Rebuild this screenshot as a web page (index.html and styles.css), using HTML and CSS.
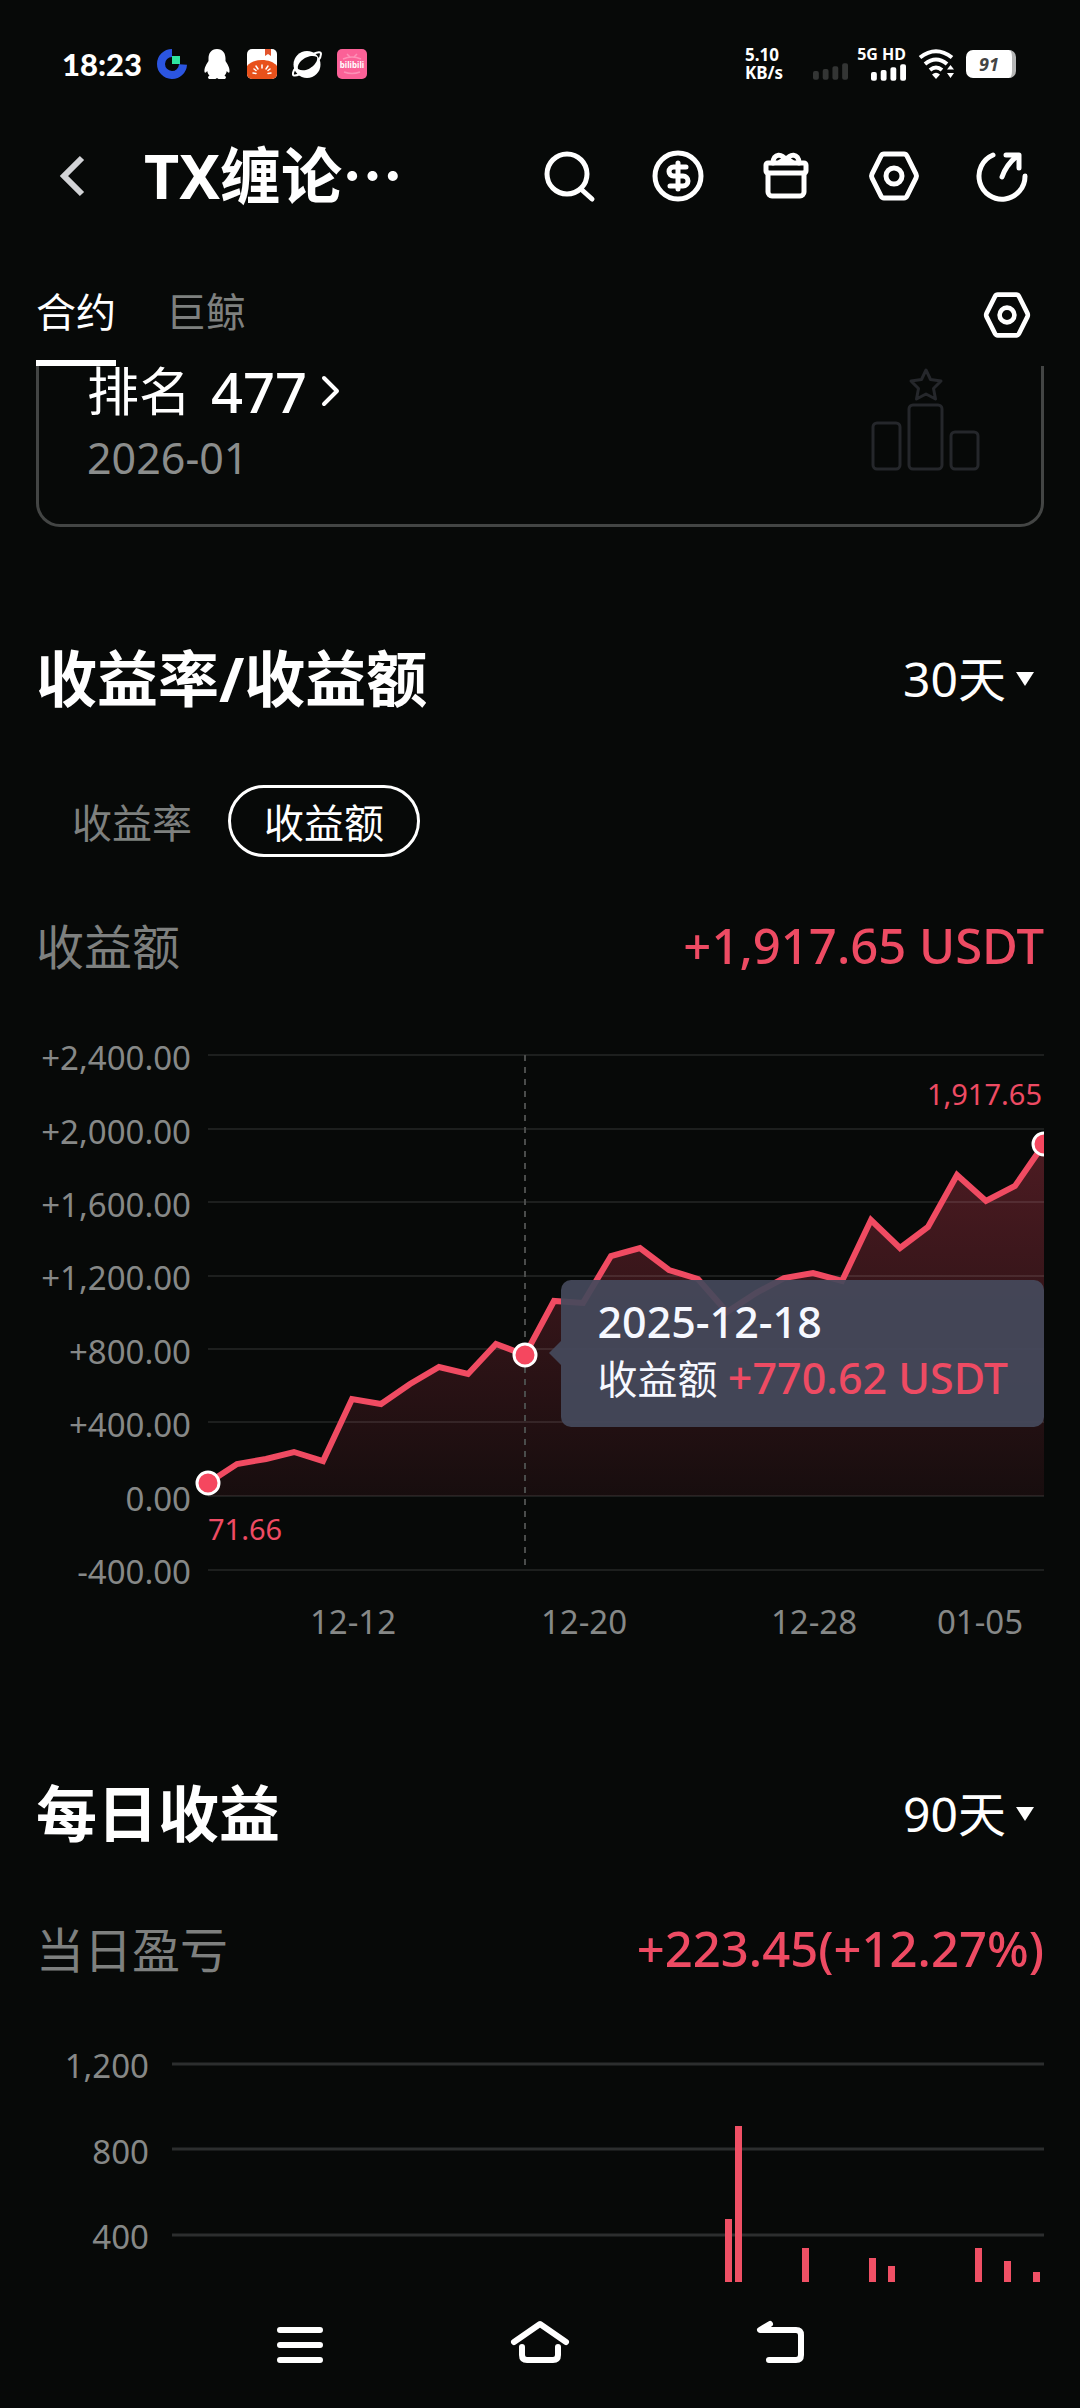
FILE: index.html
```html
<!DOCTYPE html>
<html lang="zh-CN">
<head>
    <meta charset="UTF-8">
    <meta name="viewport" content="width=device-width, initial-scale=1.0">
    <title>TX缠论</title>
    <link rel="stylesheet" href="styles.css">
</head>
<body>
<div class="status-bar">
    <div class="status-left">
        <span class="clock">18:23</span>
        <svg class="app-icon" viewBox="0 0 30 30">
            <path d="M15 4A11 11 0 1 0 26 15.500" fill="none" stroke="#2b55e0" stroke-width="8"/>
            <rect x="15" y="7" width="8" height="8" fill="#2ee6a0"/>
        </svg>
        <svg class="app-icon" viewBox="0 0 30 30" fill="#fff">
            <path d="M15 0C9 0 6.500 4.500 6.500 9.500V12C4.500 15 2 19 2.500 23C3 24.500 4 23.500 5.200 22C5.600 24 6.500 25.500 7.500 26.500C5.500 27.500 5.500 30 8 30H13.500L15 29L16.500 30H22C24.500 30 24.500 27.500 22.500 26.500C23.500 25.500 24.400 24 24.800 22C26 23.500 27 24.500 27.500 23C28 19 25.500 15 23.500 12V9.500C23.500 4.500 21 0 15 0Z"/>
        </svg>
        <svg class="app-icon" viewBox="0 0 30 30">
            <rect width="30" height="30" rx="5" fill="#fff"/>
            <path d="M18 0H24V7L21 5L18 7Z" fill="#e2542c"/>
            <path d="M0 17C6 9 24 9 30 17V25A5 5 0 0 1 25 30H5A5 5 0 0 1 0 25Z" fill="#e8511b"/>
            <path d="M15 16V19M9 17L11 20M21 17L19 20M6 24L9 24.500M24 24L21 24.500M7 20L9 21.500M23 20L21 21.500" stroke="#fff" stroke-width="1.500" stroke-linecap="round"/>
        </svg>
        <svg class="app-icon" viewBox="0 0 30 30">
            <circle cx="15" cy="15.500" r="13.500" fill="#fff"/>
            <path d="M6 20C4 13 17 4 25 8C27 14 15 25 6 20Z" fill="#070908"/>
            <path d="M4 18C1 22 -0 26 2 26.500C4 27 6 26 8 25M21 5C26 3 29 2.500 29 5C29 7 27.500 10 26 12" fill="none" stroke="#fff" stroke-width="2"/>
        </svg>
        <svg class="app-icon" viewBox="0 0 30 30">
            <rect width="30" height="30" rx="5" fill="#fb6197"/>
            <path d="M10 5L13 8M20 5L17 8M6 10Q15 6 24 10M7 23Q15 26 23 23" fill="none" stroke="#fd90b6" stroke-width="1.500"/>
            <text x="15" y="19" text-anchor="middle" class="tiny-logo">bilibili</text>
        </svg>
    </div>
    <div class="status-right">
        <div class="net-speed">
            <span>5.10</span>
            <span>KB/s</span>
        </div>
        <svg class="signal dim" viewBox="0 0 36 17">
            <rect y="8" width="6" height="9" rx="2"/>
            <rect x="10" y="6" width="6" height="11" rx="2"/>
            <rect x="20" y="3" width="6" height="14" rx="2"/>
            <rect x="30" width="6" height="17" rx="2"/>
        </svg>
        <div class="carrier">
            <span>5G HD</span>
            <svg class="signal" viewBox="0 0 36 17">
                <rect y="8" width="6" height="9" rx="2"/>
                <rect x="10" y="6" width="6" height="11" rx="2"/>
                <rect x="20" y="3" width="6" height="14" rx="2"/>
                <rect x="30" width="6" height="17" rx="2"/>
            </svg>
        </div>
        <svg class="wifi" viewBox="0 0 38 30">
            <path d="M2 8.500Q18 -4 34 8.500M7 15Q18 6 29 15M12 21Q18 16 24 21" fill="none" stroke="#fff" stroke-width="4"/>
            <path d="M14 25.500Q18 22 22 25.500L18 30Z" fill="#fff"/>
            <path d="M29 20.500L32.500 16L36 20.500ZM29 24L32.500 29L36 24Z" fill="#fff"/>
        </svg>
        <div class="battery">91</div>
    </div>
</div>

<header>
    <button class="icon-button back" aria-label="返回">
        <svg viewBox="0 0 54 54"><path d="M46 9L28 27L46 45" stroke="#d2d3d6" stroke-width="6"/></svg>
    </button>
    <h1>TX缠论⋯</h1>
    <div class="header-right">
        <button class="icon-button" aria-label="搜索">
            <svg viewBox="0 0 54 54"><circle cx="24" cy="25" r="20"/><path d="M39 41L49 50"/></svg>
        </button>
        <button class="icon-button" aria-label="资产">
            <svg viewBox="0 0 54 54"><circle cx="27" cy="27" r="23"/><path d="M27 14V40M35 18H22.500A4.500 4.500 0 0 0 22.500 27H32A5 5 0 0 1 32 37H19"/></svg>
        </button>
        <button class="icon-button" aria-label="礼物">
            <svg viewBox="0 0 54 54">
                <rect x="7" y="14" width="40" height="10" rx="2"/>
                <path d="M9 24V43A4 4 0 0 0 13 47H41A4 4 0 0 0 45 43V24M14 14C14 4 24 4 27 12C30 4 40 4 40 14M21 13L27 9L33 13"/>
            </svg>
        </button>
        <button class="icon-button" aria-label="设置">
            <svg viewBox="0 0 54 54"><path d="M17 5H37Q39 5 40 7L49 25Q50 27 49 29L40 47Q39 49 37 49H17Q15 49 14 47L5 29Q4 27 5 25L14 7Q15 5 17 5Z"/><circle cx="27" cy="27" r="8"/></svg>
        </button>
        <button class="icon-button" aria-label="分享">
            <svg viewBox="0 0 54 54"><path d="M18 6A23 23 0 1 0 50 27M27 28Q31 16 42 7M31 6H44V19"/></svg>
        </button>
    </div>
</header>

<nav class="tabs">
    <a href="#" class="tab active">合约</a>
    <a href="#" class="tab">巨鲸</a>
    <button class="icon-button tab-settings" aria-label="设置">
        <svg viewBox="0 0 54 54"><path d="M17 5H37Q39 5 40 7L49 25Q50 27 49 29L40 47Q39 49 37 49H17Q15 49 14 47L5 29Q4 27 5 25L14 7Q15 5 17 5Z"/><circle cx="27" cy="27" r="8"/></svg>
    </button>
</nav>

<main>
    <a href="#" class="rank-card">
        <div>
            <div class="rank-title">
                <span>排名</span>
                <b>477</b>
                <svg viewBox="0 0 20 32"><path d="M3 3L16 16L3 29" fill="none" stroke="#fff" stroke-width="4" stroke-linecap="round" stroke-linejoin="round"/></svg>
            </div>
            <p class="rank-date">2026-01</p>
        </div>
        <svg class="podium" viewBox="0 0 110 105">
            <path d="M55 4L59.500 13.500L70 15L62.500 22.500L64.500 33L55 28L45.500 33L47.500 22.500L40 15L50.500 13.500Z"/>
            <rect x="2" y="57" width="27" height="46" rx="4"/>
            <rect x="38" y="39" width="33" height="64" rx="4"/>
            <rect x="80" y="66" width="27" height="37" rx="4"/>
        </svg>
    </a>

    <section>
        <div class="section-head">
            <h2>收益率/收益额</h2>
            <label class="period">
                <select aria-label="收益周期">
                    <option>30天</option>
                </select>
                <svg viewBox="0 0 18 14"><path d="M0 0H18L9 14Z" fill="#fff"/></svg>
            </label>
        </div>
        <div class="toggle">
            <button>收益率</button>
            <button class="selected">收益额</button>
        </div>
        <div class="summary">
            <span class="summary-label">收益额</span>
            <span class="summary-value">+1,917.65 USDT</span>
        </div>
        <div class="profit-chart">
            <svg viewBox="0 -10 1008 624">
                <defs>
                    <linearGradient id="fade" x1="0" y1="0" x2="0" y2="1">
                        <stop offset="0" stop-color="#f0465f" stop-opacity="0.300"/>
                        <stop offset="1" stop-color="#f0465f" stop-opacity="0.070"/>
                    </linearGradient>
                </defs>
                <!-- y axis -->
                <g class="axis-text" text-anchor="end">
                    <text x="155" y="30">+2,400.00</text>
                    <text x="155" y="104">+2,000.00</text>
                    <text x="155" y="177">+1,600.00</text>
                    <text x="155" y="250">+1,200.00</text>
                    <text x="155" y="324">+800.00</text>
                    <text x="155" y="397">+400.00</text>
                    <text x="155" y="471">0.00</text>
                    <text x="155" y="544">-400.00</text>
                </g>
                <!-- x axis -->
                <g class="axis-text" text-anchor="middle">
                    <text x="317" y="594">12-12</text>
                    <text x="548" y="594">12-20</text>
                    <text x="778" y="594">12-28</text>
                    <text x="944" y="594">01-05</text>
                </g>
                <path d="M172 443L201 424L230 419L258 412L287 421L316 359L345 364L374 344L403 327L432 334L460 304L489 315L518 261L547 263L575 216L604 208L633 230L662 239L691 272L720 253L748 238L777 233L806 241L835 180L864 208L892 187L921 135L950 161L979 146L1008 104V456H172Z" fill="url(#fade)"/>
                <path class="grid" d="M172 15H1008M172 89H1008M172 162H1008M172 236H1008M172 309H1008M172 382H1008M172 456H1008M172 530H1008"/>
                <path class="cursor" d="M489 15V526"/>
                <path class="profit-line" d="M172 443L201 424L230 419L258 412L287 421L316 359L345 364L374 344L403 327L432 334L460 304L489 315L518 261L547 263L575 216L604 208L633 230L662 239L691 272L720 253L748 238L777 233L806 241L835 180L864 208L892 187L921 135L950 161L979 146L1008 104"/>
                <g class="marker">
                    <circle cx="172" cy="443" r="11"/>
                    <circle cx="489" cy="315" r="11"/>
                    <circle cx="1008" cy="104" r="11"/>
                </g>
                <text x="172" y="500" class="point-text">71.66</text>
                <text x="1006" y="65" class="point-text" text-anchor="end">1,917.65</text>
            </svg>
            <div class="tooltip">
                <div>2025-12-18</div>
                <div class="tooltip-row">收益额 <span>+770.62 USDT</span></div>
            </div>
        </div>
    </section>

    <section class="daily">
        <div class="section-head">
            <h2>每日收益</h2>
            <label class="period">
                <select aria-label="每日收益周期">
                    <option>90天</option>
                </select>
                <svg viewBox="0 0 18 14"><path d="M0 0H18L9 14Z" fill="#fff"/></svg>
            </label>
        </div>
        <div class="summary">
            <span class="summary-label">当日盈亏</span>
            <span class="summary-value">+223.45(+12.27%)</span>
        </div>
        <svg class="daily-chart" viewBox="0 0 1008 242">
            <g class="axis-text" text-anchor="end">
                <text x="113" y="38">1,200</text>
                <text x="113" y="124">800</text>
                <text x="113" y="209">400</text>
            </g>
            <path class="daily-grid" d="M136 24H1008M136 109H1008M136 195H1008"/>
            <g class="bars">
                <rect x="689" y="179" width="7" height="63"/>
                <rect x="699" y="86" width="7" height="156"/>
                <rect x="766" y="208" width="7" height="34"/>
                <rect x="833" y="218" width="7" height="24"/>
                <rect x="852" y="226" width="7" height="16"/>
                <rect x="939" y="208" width="7" height="34"/>
                <rect x="968" y="221" width="7" height="21"/>
                <rect x="997" y="232" width="7" height="10"/>
            </g>
        </svg>
    </section>
</main>

<footer class="system-nav">
    <button aria-label="最近任务">
        <svg viewBox="0 0 60 60"><path d="M10 15H50M10 30H50M10 45H50"/></svg>
    </button>
    <button aria-label="主屏幕">
        <svg viewBox="0 0 60 60"><path d="M4 27L30 9L56 27M12 32V40Q12 45 17 45H43Q48 45 48 40V32"/></svg>
    </button>
    <button aria-label="后退">
        <svg viewBox="0 0 60 60"><path d="M20 9L10 15H46Q51 15 51 20V40Q51 45 46 45H19"/></svg>
    </button>
</footer>
</body>
</html>
```
FILE: styles.css
```css
* {
    box-sizing: border-box;
}

body {
    margin: 0;
    min-height: 100vh;
    display: flex;
    flex-direction: column;
    background: #070908;
    color: #fff;
    font-family: "Noto Sans", "Noto Sans CJK SC", sans-serif;
}

button {
    padding: 0;
    border: none;
    background: none;
    color: inherit;
    font-family: inherit;
    cursor: pointer;
}

a {
    color: inherit;
    text-decoration: none;
}

svg {
    display: block;
    flex-shrink: 0;
}

/* Status bar */
.status-bar {
    display: flex;
    justify-content: space-between;
    padding: 48px 60px 0 62px;
    font-weight: 700;
}

.status-left,
.status-right {
    display: flex;
    align-items: center;
    height: 32px;
}

.status-left {
    gap: 15px;
}

.clock {
    font-family: Lato, sans-serif;
    font-size: 31px;
    font-weight: 900;
}

.app-icon {
    width: 30px;
    height: 30px;
}

.tiny-logo {
    font-size: 8px;
    fill: #fff;
}

.net-speed {
    display: flex;
    flex-direction: column;
    font-size: 17px;
    line-height: 18px;
    margin-right: 30px;
}

.signal {
    width: 35px;
    height: 17px;
    fill: #fff;
}

.signal.dim {
    fill: #333534;
    align-self: flex-end;
    margin-right: 9px;
}

.carrier {
    display: flex;
    flex-direction: column;
    align-items: flex-end;
    gap: 2px;
    font-size: 16px;
    line-height: 15px;
    margin-right: 12px;
}

.wifi {
    width: 38px;
    height: 30px;
    margin-right: 10px;
}

.battery {
    width: 50px;
    height: 28px;
    border-radius: 7px;
    border-right: 4px solid #b5b6b6;
    background: #fff;
    color: #444;
    font-size: 18px;
    font-style: italic;
    line-height: 28px;
    text-align: center;
    margin-right: 4px;
}

/* Header */
header {
    display: flex;
    align-items: center;
    padding: 54px 51px 0 36px;
}

.icon-button,
.icon-button svg {
    width: 54px;
    height: 54px;
}

.icon-button svg {
    fill: none;
    stroke: #fff;
    stroke-width: 5;
    stroke-linecap: round;
    stroke-linejoin: round;
}

.back svg {
    stroke-linecap: butt;
    stroke-linejoin: miter;
}

h1,
h2 {
    margin: 0;
    font-size: 61px;
    line-height: 84px;
}

h1 {
    margin: 0 auto 0 54px;
}

.header-right {
    display: flex;
    gap: 54px;
}

/* Tabs */
.tabs {
    display: flex;
    align-items: flex-start;
    gap: 50px;
    padding: 64px 46px 0 36px;
}

.tab {
    padding-bottom: 18px;
    border-bottom: 6px solid transparent;
    color: #7e807f;
    font-size: 40px;
    line-height: 60px;
}

.tab.active {
    border-color: #fff;
    color: #fff;
}

.tab-settings {
    margin-left: auto;
    padding: 8px 2px;
}

.tab-settings svg {
    width: 50px;
    height: 50px;
}

main {
    padding: 0 36px;
}

/* Rank card */
.rank-card {
    display: flex;
    justify-content: space-between;
    padding: 0 60px 36px 48px;
    border: 3px solid #434544;
    border-top: none;
    border-radius: 0 0 24px 24px;
}

.rank-title {
    display: flex;
    align-items: center;
    gap: 14px;
    font-size: 52px;
    line-height: 50px;
}

.rank-title b {
    margin-left: 6px;
    font-size: 56px;
    font-weight: 500;
}

.rank-title svg {
    width: 20px;
    height: 32px;
}

.rank-date {
    margin: 12px 0 0;
    color: #8b8d8c;
    font-size: 43px;
    line-height: 60px;
}

.podium {
    width: 110px;
    height: 105px;
    fill: none;
    stroke: #25272b;
    stroke-width: 3;
    stroke-linejoin: round;
}

/* Sections */
section {
    padding-top: 110px;
}

.daily {
    padding-top: 118px;
}

.section-head,
.summary {
    display: flex;
    justify-content: space-between;
    align-items: center;
}

.period {
    display: flex;
    align-items: center;
    gap: 10px;
    padding-right: 10px;
}

.period select {
    appearance: none;
    padding: 0;
    border: none;
    background: none;
    color: #fff;
    font-family: inherit;
    font-size: 48px;
    line-height: 64px;
}

.period svg {
    width: 18px;
    height: 14px;
}

.toggle {
    display: flex;
    margin-top: 64px;
}

.toggle button {
    height: 72px;
    padding: 0 33px;
    border: 3px solid transparent;
    border-radius: 36px;
    color: #7e807f;
    font-size: 40px;
}

.toggle .selected {
    border-color: #fff;
    color: #fff;
}

.summary {
    margin-top: 56px;
    font-size: 48px;
    line-height: 64px;
}

.summary-label {
    padding-top: 4px;
    color: #7e807f;
    line-height: 60px;
}

.summary-value {
    color: #ee4b63;
    font-size: 49px;
    font-weight: 500;
}

/* Profit chart */
.profit-chart {
    position: relative;
    margin-top: 53px;
}

.profit-chart svg,
.daily-chart {
    width: 100%;
}

.axis-text {
    fill: #868887;
    font-size: 33px;
}

.grid {
    stroke: #fff;
    stroke-opacity: 0.09;
    stroke-width: 2;
}

.cursor {
    stroke: #4a4c4b;
    stroke-width: 2;
    stroke-dasharray: 6 6;
}

.profit-line {
    fill: none;
    stroke: #f04b62;
    stroke-width: 6;
}

.marker {
    fill: #f5475f;
    stroke: #fff;
    stroke-width: 3;
}

.point-text {
    fill: #ee4b63;
    font-size: 29px;
}

.tooltip {
    position: absolute;
    top: 40%;
    right: 0;
    padding: 14px 36px 20px;
    border-radius: 10px;
    background: rgba(69, 73, 91, 0.93);
    color: #f6f8ff;
    font-size: 43px;
    font-weight: 500;
    line-height: 56px;
    white-space: nowrap;
}

.tooltip::before {
    content: "";
    position: absolute;
    top: 50%;
    right: 100%;
    margin-top: -12px;
    border: 12px solid transparent;
    border-left: none;
    border-right-color: rgba(69, 73, 91, 0.93);
}

.tooltip-row {
    font-size: 40px;
    font-weight: 400;
}

.tooltip-row span {
    color: #ee4b63;
    font-size: 43px;
    font-weight: 500;
}

/* Daily chart */
.daily .summary {
    margin-top: 60px;
}

.daily-chart {
    margin-top: 60px;
}

.daily-grid {
    stroke: #2c2e2e;
    stroke-width: 3;
}

.bars {
    fill: #f05065;
}

/* System navigation */
.system-nav {
    display: flex;
    justify-content: center;
    gap: 180px;
    margin-top: auto;
    padding: 33px 0;
}

.system-nav svg {
    width: 60px;
    height: 60px;
    fill: none;
    stroke: #fff;
    stroke-width: 6;
    stroke-linecap: round;
    stroke-linejoin: round;
}
```
